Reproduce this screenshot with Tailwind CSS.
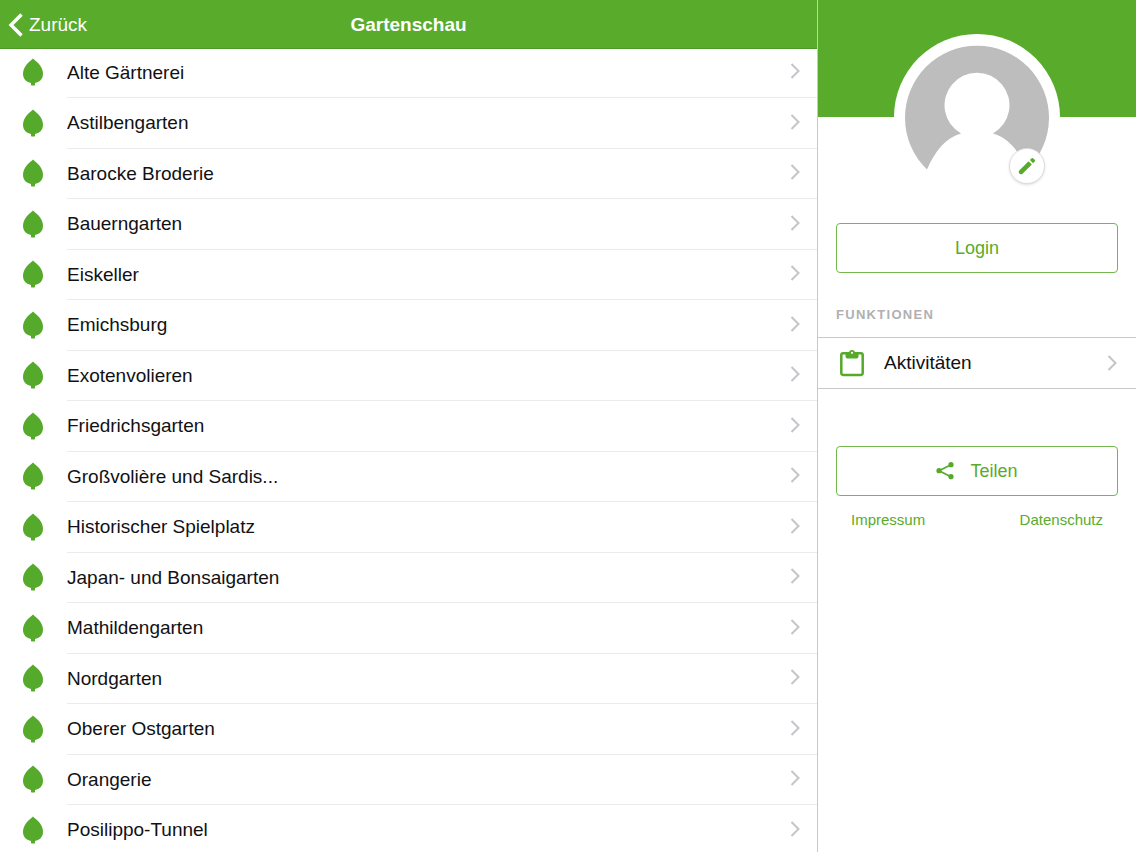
<!DOCTYPE html>
<html lang="de">
<head>
<meta charset="utf-8">
<meta name="viewport" content="width=device-width, initial-scale=1">
<title>Gartenschau</title>
<script src="https://cdn.jsdelivr.net/npm/@tailwindcss/browser@4"></script>
</head>
<body class="flex h-screen overflow-hidden bg-white font-['Liberation_Sans',Arial,sans-serif] text-[#111114]">

<svg class="hidden" aria-hidden="true">
  <symbol id="leaf" viewBox="0 0 20 28"><path d="M10 0.500C11.500 2.300 14 3.500 16.200 6.200C18.500 9 20 12.300 20 15.500C20 18.500 19.300 20.500 17.600 22.200C16 23.600 14 24.300 12 25V27.200Q10 28 8 27.200V25C6 24.300 4 23.600 2.400 22.200C0.700 20.500 0 18.500 0 15.500C0 12.300 1.500 9 3.800 6.200C6 3.500 8.500 2.300 10 0.500Z" fill="#56aa2b"/></symbol>
  <symbol id="chevron" viewBox="0 0 10 16"><path d="M1.500 1L8.500 8L1.500 15" fill="none" stroke="#c4c4c9" stroke-width="2"/></symbol>
</svg>

<main class="flex min-w-0 flex-1 flex-col">
  <header class="relative z-10 grid h-[49px] shrink-0 grid-cols-[1fr_auto_1fr] items-center border-b border-[#4d9a26] bg-[#59ab2c] pt-0.5 text-white">
    <button type="button" class="flex items-center gap-1.5 justify-self-start pl-2 text-[19px]">
      <svg class="h-6 w-[15px]" viewBox="0 0 15 24" aria-hidden="true"><path d="M13.500 1.500L3 12L13.500 22.500" fill="none" stroke="currentColor" stroke-width="3.400"/></svg>
      Zurück
    </button>
    <h1 class="text-[19px] font-bold">Gartenschau</h1>
  </header>
  <ul id="places" class="-mt-px min-h-0 flex-1 overflow-hidden"></ul>
</main>

<aside class="flex w-[319px] shrink-0 flex-col border-l border-[#c8c7cc]">
  <div class="flex h-[117px] shrink-0 justify-center bg-[#59ab2c] pt-[34px]">
    <div class="relative size-[166px] shrink-0 rounded-full bg-white p-[11px]">
      <svg class="size-36" viewBox="0 0 144 144" role="img" aria-label="Profilbild">
        <path d="M22 124.500A72 72 0 1 1 122 124.500C114 106 103 92.500 88 88.500A32.500 32.500 0 1 0 56 88.500C41 92.500 30 106 22 124.500Z" fill="#bdbdbe"/>
      </svg>
      <button type="button" aria-label="Profil bearbeiten" class="absolute right-[15px] bottom-4 flex size-9 items-center justify-center rounded-full border border-[#dedee0] bg-white shadow-sm">
        <svg class="size-[18px] shrink-0" viewBox="0 0 18 18" aria-hidden="true" fill="#56aa2b"><path d="M0.800 15.300Q0.600 14.300 1.300 13.600L10.600 4.300L13.800 7.500L4.500 16.800Q3.800 17.500 2.800 17.300Q1.100 17.200 0.800 15.300Z"/><path d="M11.900 3L13.500 1.400Q14.400 0.600 15.300 1.400L16.700 2.800Q17.500 3.700 16.700 4.600L15.100 6.200Z"/></svg>
      </button>
    </div>
  </div>

  <div class="mt-[106px] px-[18px]">
    <button type="button" class="h-[50px] w-full rounded border border-[#72b84c] text-[18px] text-[#59ab2c]">Login</button>
  </div>

  <h2 class="mt-8 px-[18px] text-[13px] leading-5 font-bold tracking-widest text-[#b0b0b3]">FUNKTIONEN</h2>
  <a href="#aktivitaeten" class="mt-3 flex h-[52px] items-center border-y border-[#c8c7cc] pr-[19px] pl-[22px] text-[19px]">
    <svg class="mr-5 h-7 w-6" viewBox="0 0 24 28" aria-hidden="true"><rect x="1.300" y="4.300" width="21.400" height="21.600" rx="1.800" fill="none" stroke="#56aa2b" stroke-width="2.500"/><path d="M5.500 3.500H8.800A3.300 3.300 0 0 1 15.200 3.500H18.500V7.500A2 2 0 0 1 16.500 9.500H7.500A2 2 0 0 1 5.500 7.500Z" fill="#56aa2b"/><circle cx="12" cy="3.800" r="1.100" fill="#fff"/></svg>
    <span class="flex-1">Aktivitäten</span>
    <svg class="h-4 w-2.5" aria-hidden="true"><use href="#chevron"/></svg>
  </a>

  <div class="mt-[57px] px-[18px]">
    <button type="button" class="flex h-[50px] w-full items-center justify-center gap-4 rounded border border-[#72b84c] text-[18px] text-[#59ab2c]">
      <svg class="h-[18px] w-[18px]" viewBox="0 0 18 18" aria-hidden="true"><path d="M15 2.700L3 8.700L15 14.700" fill="none" stroke="#56aa2b" stroke-width="1.700"/><g fill="#56aa2b"><circle cx="15" cy="2.700" r="2.600"/><circle cx="3" cy="8.700" r="2.600"/><circle cx="15" cy="14.700" r="2.600"/></g></svg>
      Teilen
    </button>
  </div>
  <nav class="mt-3.5 flex justify-between px-[33px] text-[15px] leading-5 text-[#59ab2c]">
    <a href="#impressum">Impressum</a>
    <a href="#datenschutz">Datenschutz</a>
  </nav>
</aside>

<script>
  const places = ["Alte Gärtnerei", "Astilbengarten", "Barocke Broderie", "Bauerngarten", "Eiskeller", "Emichsburg", "Exotenvolieren", "Friedrichsgarten", "Großvolière und Sardis...", "Historischer Spielplatz", "Japan- und Bonsaigarten", "Mathildengarten", "Nordgarten", "Oberer Ostgarten", "Orangerie", "Posilippo-Tunnel"];
  document.getElementById("places").innerHTML = places.map(name => `
    <li class="odd:h-[50px] even:h-[51px]">
      <a href="#" class="flex h-full items-center pl-[23px] text-[19px]">
        <svg class="mr-6 mb-0.5 h-7 w-5 shrink-0" aria-hidden="true"><use href="#leaf"/></svg>
        <span class="flex h-full min-w-0 flex-1 items-center justify-between border-b border-[#ebebed] pr-[17px]">
          <span class="truncate pt-px">${name}</span>
          <svg class="mb-[3px] h-4 w-2.5 shrink-0" aria-hidden="true"><use href="#chevron"/></svg>
        </span>
      </a>
    </li>`).join("");
</script>
</body>
</html>
